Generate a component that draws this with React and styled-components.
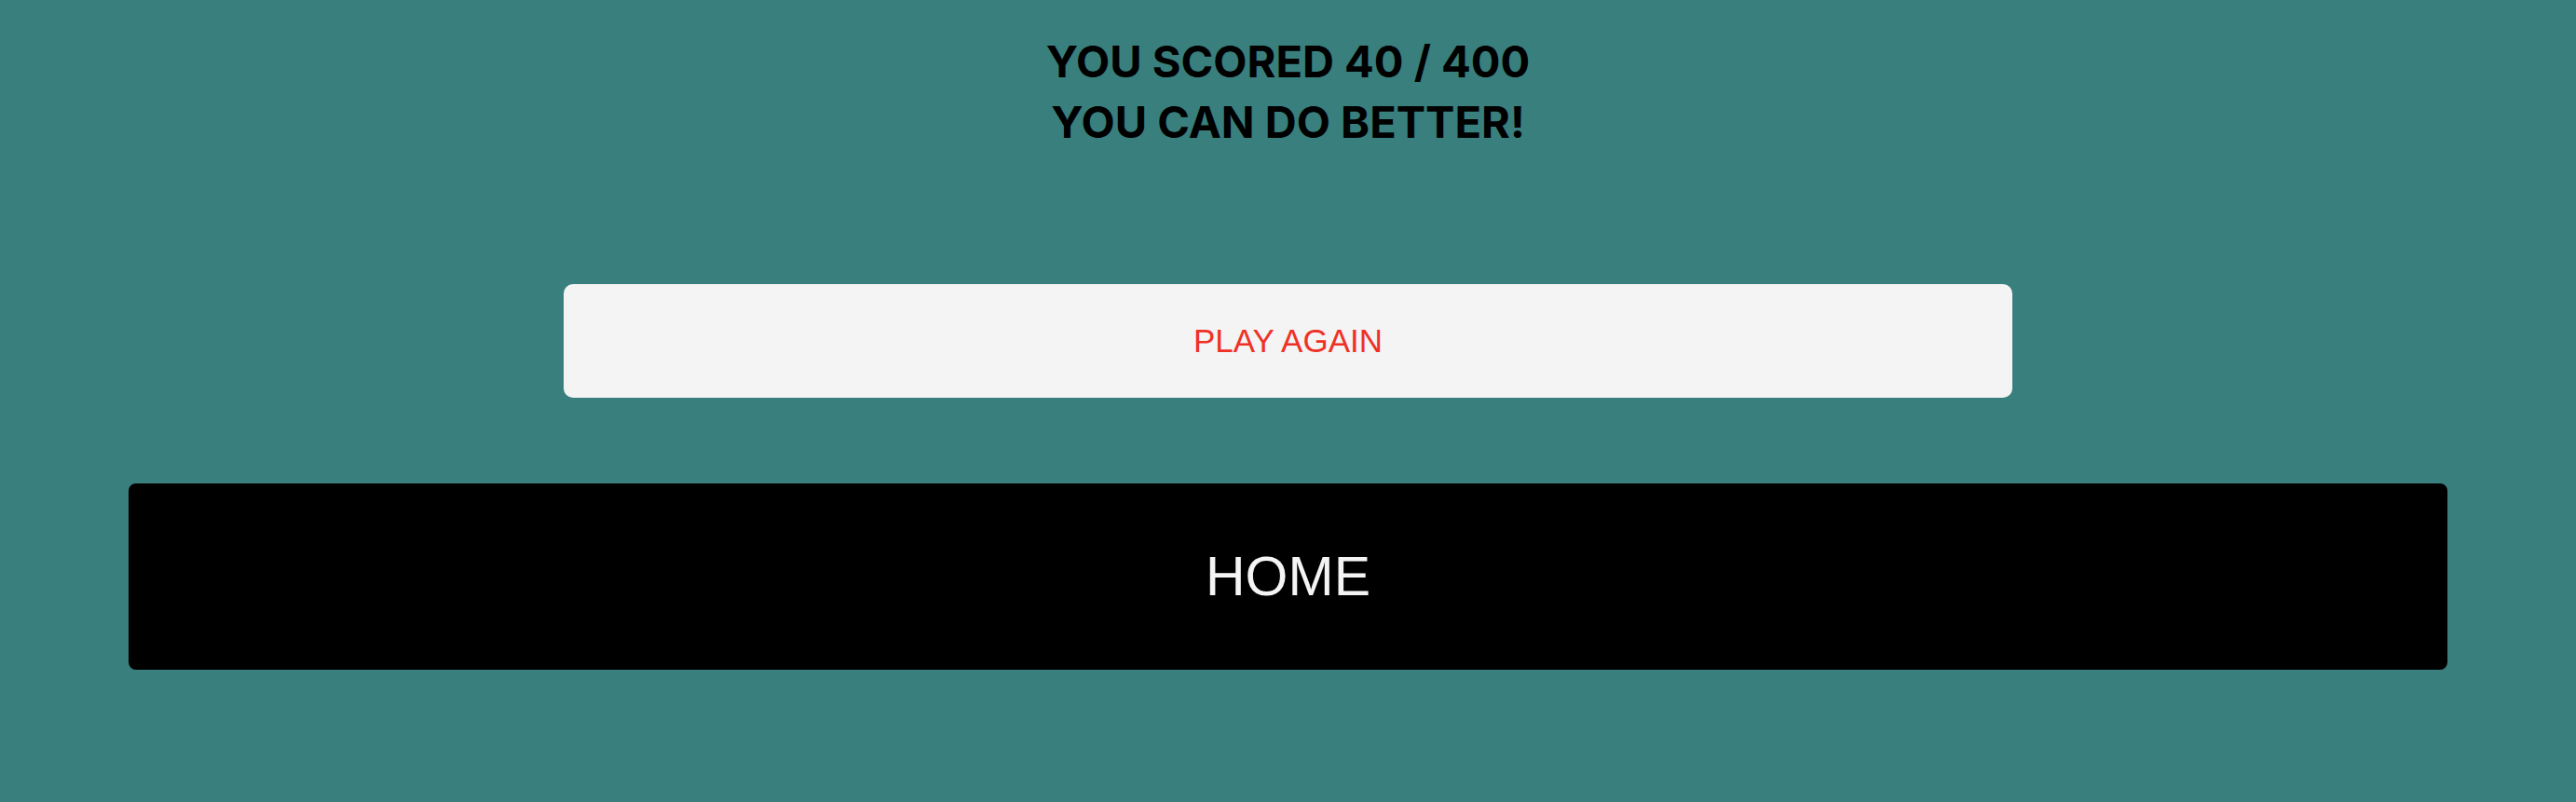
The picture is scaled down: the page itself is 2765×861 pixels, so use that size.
import styled, { createGlobalStyle } from "styled-components";

const GlobalStyle = createGlobalStyle`
  html, body {
    margin: 0;
    padding: 0;
    background: #387f7d;
  }
`;

const Page = styled.div`
  display: flex;
  flex-direction: column;
  align-items: center;
  min-height: 861px;
  background: #387f7d;
  padding-top: 33px;
  box-sizing: border-box;
`;

const Result = styled.h1`
  margin: 0;
  font-family: Inter, "Liberation Sans", sans-serif;
  font-weight: 700;
  font-size: 47px;
  line-height: 65px;
  color: #000;
  text-align: center;
  text-transform: uppercase;
`;

const Buttons = styled.div`
  display: flex;
  flex-direction: column;
  align-items: center;
  gap: 92px;
  width: 90%;
  margin-top: 142px;
`;

const Button = styled.button`
  display: flex;
  align-items: center;
  justify-content: center;
  border: none;
  cursor: pointer;
  font-family: "Liberation Sans", Arial, sans-serif;
  width: ${(p) => (p.$primary ? "100%" : "62.5%")};
  height: ${(p) => (p.$primary ? "200px" : "122px")};
  border-radius: ${(p) => (p.$primary ? "8px" : "10px")};
  background: ${(p) => (p.$primary ? "#000" : "#f4f4f4")};
  color: ${(p) => (p.$primary ? "#f4f4f4" : "#ee3226")};
  font-size: ${(p) => (p.$primary ? "59px" : "35px")};
`;

function App() {
  const score = 40;
  const total = 400;

  return (
    <Page>
      <GlobalStyle />
      <Result>
        You scored {score} / {total}
        <br />
        You can do better!
      </Result>
      <Buttons>
        <Button>PLAY AGAIN</Button>
        <Button $primary>HOME</Button>
      </Buttons>
    </Page>
  );
}

export default App;
